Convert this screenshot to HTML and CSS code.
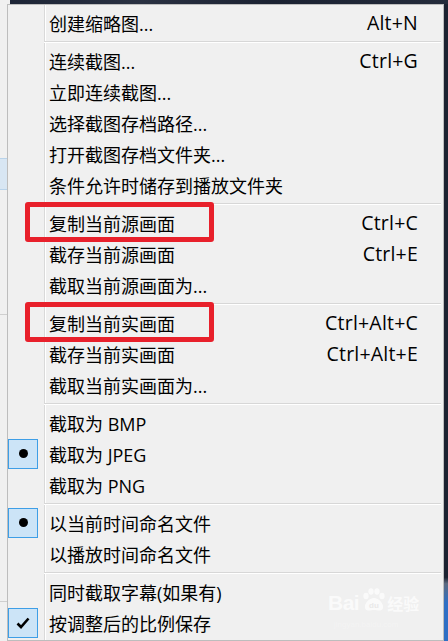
FILE: index.html
```html
<!DOCTYPE html>
<html lang="zh-CN">
<head>
<meta charset="utf-8">
<link rel="stylesheet" href="styles.css">
</head>
<body>
<div class="desk">
  <div class="topbar"></div>
  <div class="row">
    <div class="leftpane">
      <div class="lp-sel"></div>
      <div class="lp-line lp-line1"></div>
      <div class="lp-line lp-line2"></div>
    </div>
    <div class="menu">
      <div class="item"><span class="icon"></span><span class="label">创建缩略图...</span><span class="key">Alt+N</span></div>
      <div class="sep"></div>
      <div class="item"><span class="icon"></span><span class="label">连续截图...</span><span class="key">Ctrl+G</span></div>
      <div class="item"><span class="icon"></span><span class="label">立即连续截图...</span></div>
      <div class="item"><span class="icon"></span><span class="label">选择截图存档路径...</span></div>
      <div class="item"><span class="icon"></span><span class="label">打开截图存档文件夹...</span></div>
      <div class="item"><span class="icon"></span><span class="label">条件允许时储存到播放文件夹</span></div>
      <div class="sep"></div>
      <div class="item marked"><span class="icon"></span><span class="label">复制当前源画面</span><span class="key">Ctrl+C</span></div>
      <div class="item"><span class="icon"></span><span class="label">截存当前源画面</span><span class="key">Ctrl+E</span></div>
      <div class="item"><span class="icon"></span><span class="label">截取当前源画面为...</span></div>
      <div class="sep"></div>
      <div class="item marked"><span class="icon"></span><span class="label">复制当前实画面</span><span class="key">Ctrl+Alt+C</span></div>
      <div class="item"><span class="icon"></span><span class="label">截存当前实画面</span><span class="key">Ctrl+Alt+E</span></div>
      <div class="item"><span class="icon"></span><span class="label">截取当前实画面为...</span></div>
      <div class="sep"></div>
      <div class="item"><span class="icon"></span><span class="label">截取为 BMP</span></div>
      <div class="item"><span class="icon on"><span class="dot"></span></span><span class="label">截取为 JPEG</span></div>
      <div class="item"><span class="icon"></span><span class="label">截取为 PNG</span></div>
      <div class="sep"></div>
      <div class="item"><span class="icon on"><span class="dot"></span></span><span class="label">以当前时间命名文件</span></div>
      <div class="item"><span class="icon"></span><span class="label">以播放时间命名文件</span></div>
      <div class="sep"></div>
      <div class="item"><span class="icon"></span><span class="label">同时截取字幕(如果有)</span></div>
      <div class="item"><span class="icon on"><svg class="tick" width="14" height="12" viewBox="0 0 14 12"><path d="M1.5 6.5 L5 10 L12.5 1.5" fill="none" stroke="#000" stroke-width="2.6"/></svg></span><span class="label">按调整后的比例保存</span></div>

      <div class="watermark">
        <span class="wm-bai">Bai</span>
        <svg class="wm-paw" width="26" height="26" viewBox="0 0 26 26">
          <ellipse cx="6" cy="9" rx="2.6" ry="3.2" fill="#fff"/>
          <ellipse cx="11" cy="4.5" rx="2.6" ry="3.2" fill="#fff"/>
          <ellipse cx="17" cy="4.5" rx="2.6" ry="3.2" fill="#fff"/>
          <ellipse cx="22" cy="9" rx="2.6" ry="3.2" fill="#fff"/>
          <path d="M14 11 C9 11 4 17 5 21 C6 25 11 23 14 23 C17 23 22 25 23 21 C24 17 19 11 14 11 Z" fill="#fff"/>
          <text x="14" y="21" font-size="8" text-anchor="middle" fill="#e6e6e6" font-family="Liberation Sans, sans-serif" font-weight="bold">du</text>
        </svg>
        <span class="wm-jy">经验</span>
        <span class="wm-url">jingyan.baidu.com</span>
      </div>
    </div>
    <div class="rightpane"></div>
  </div>
</div>
</body>
</html>
```

FILE: styles.css
```css
html, body {
  margin: 0;
  padding: 0;
}
body {
  width: 448px;
  height: 641px;
  overflow: hidden;
  background: #f0f0f0;
  font-family: "Open Sans", "Noto Sans CJK SC", sans-serif;
  color: #000;
}
.desk {
  display: flex;
  flex-direction: column;
  height: 641px;
}
.topbar {
  height: 4px;
  margin-left: 10px;
  background: linear-gradient(to right, #1d2536, #2a3142 30%, #1b2232 60%, #242b3b);
  flex: none;
}
.row {
  display: flex;
  flex: 1;
}
.leftpane {
  width: 7px;
  flex: none;
  position: relative;
  background: #f0f0f0;
}
.lp-sel {
  position: absolute;
  left: 0;
  right: 0;
  top: 154px;
  height: 30px;
  background: #d8e6f3;
  border-top: 1px solid #b9d3ea;
  border-bottom: 1px solid #b9d3ea;
}
.lp-line {
  position: absolute;
  left: 0;
  right: 0;
  height: 1px;
  background: #cfcfcf;
}
.lp-line1 { top: 310px; }
.lp-line2 { top: 597px; }
.menu {
  width: 435px;
  flex: none;
  position: relative;
  border: 1px solid #bdbdbd;
  padding: 2px 0 0;
  background-color: #f0f0f0;
  background-image: linear-gradient(to right, transparent 36px, #d9d9d9 36px, #d9d9d9 37px, #ffffff 37px, #ffffff 38px, transparent 38px);
  height: 633px;
  box-sizing: content-box;
}
.rightpane {
  flex: 1;
  background: linear-gradient(to bottom, #1c2231 0, #1c2231 90%, #5c6a80 91%, #2f6fc4 94%, #2f6fc4 100%);
}
.item {
  height: 31px;
  display: flex;
  align-items: center;
  position: relative;
  font-size: 18px;
}
.icon {
  width: 30px;
  height: 30px;
  box-sizing: border-box;
  flex: none;
  margin-right: 11px;
  display: flex;
  align-items: center;
  justify-content: center;
}
.icon.on {
  background: #cce4f7;
  border: 1px solid #3e9ee6;
}
.dot {
  width: 9px;
  height: 9px;
  border-radius: 50%;
  background: #000;
}
.tick {
  display: block;
}
.label {
  flex: 1;
  white-space: nowrap;
}
.key {
  padding-right: 25px;
  white-space: nowrap;
  font-size: 19.5px;
  letter-spacing: 0.2px;
}
.sep {
  height: 1px;
  margin: 3px 2px 3px 36px;
  background: #d7d7d7;
  box-shadow: 0 1px 0 #ffffff;
}
.marked::after {
  content: "";
  position: absolute;
  left: 17px;
  top: -5px;
  width: 189px;
  height: 40px;
  box-sizing: border-box;
  border: 5px solid #e8202b;
  border-radius: 3px;
}
.watermark {
  position: absolute;
  left: 320px;
  top: 583px;
  width: 110px;
  height: 44px;
  display: flex;
  align-items: center;
  flex-wrap: wrap;
  opacity: 0.7;
  color: #ffffff;
}
.wm-bai {
  font-family: "Liberation Sans", sans-serif;
  font-weight: bold;
  font-size: 21px;
  letter-spacing: -0.5px;
}
.wm-paw {
  display: block;
  margin: -6px 1px 0;
}
.wm-jy {
  font-family: "Noto Sans CJK SC", sans-serif;
  font-size: 16px;
  font-weight: bold;
}
.wm-url {
  width: 100%;
  font-family: "Liberation Sans", sans-serif;
  font-size: 8px;
  color: #f6f6f6;
  padding-left: 6px;
}
```
